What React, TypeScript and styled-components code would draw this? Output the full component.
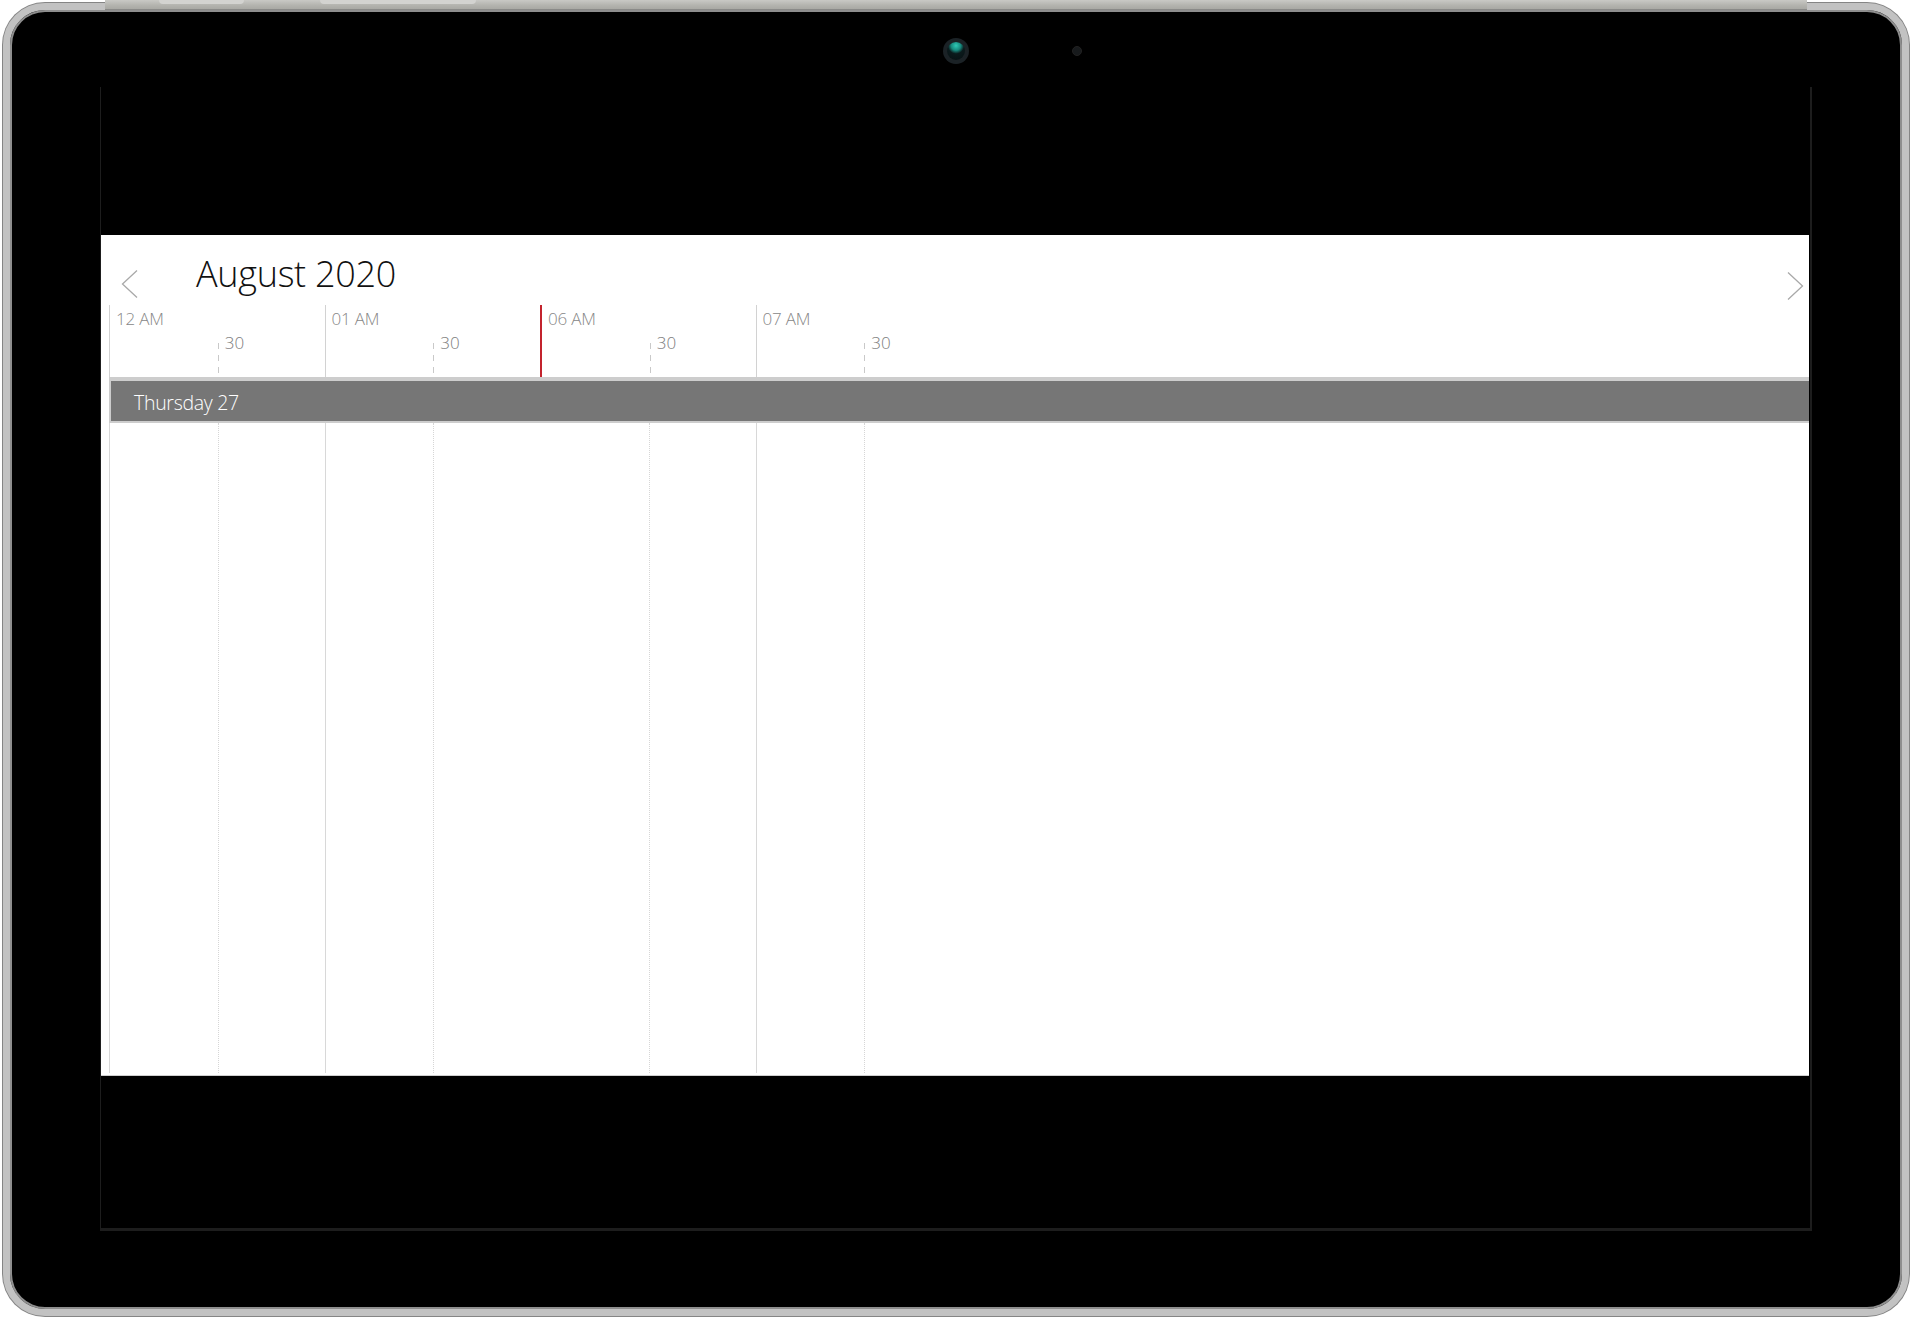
import React from "react";
import styled, { createGlobalStyle } from "styled-components";

const GlobalStyle = createGlobalStyle`
  html, body { margin: 0; padding: 0; background: #ffffff; }
  body { font-family: "Open Sans", "Noto Sans", sans-serif; }
  * { box-sizing: border-box; }
`;

const Page = styled.div`
  position: relative;
  width: 1913px;
  height: 1320px;
  padding: 3px 0 0 3px;
  overflow: hidden;
`;

const TopStrip = styled.div`
  position: absolute;
  top: 0;
  left: 105px;
  width: 1702px;
  height: 10px;
  background: linear-gradient(#c9c9c5, #b3b3ae 60%, #a9a9a4);
  border-bottom: 1px solid #8a8a88;
  display: flex;
  align-items: flex-start;
  gap: 76px;
  padding-left: 54px;
`;

const SideButton = styled.div<{ $w: number }>`
  width: ${(p) => p.$w}px;
  height: 4px;
  background: #d3d3d0;
  border-radius: 0 0 4px 4px;
`;

const Device = styled.div`
  width: 1906px;
  height: 1313px;
  border-radius: 42px;
  border: 7px solid #c2c2c2;
  background: #000;
  box-shadow: 0 0 0 1px #858585, inset 0 0 0 2px #8e8e8e;
  display: flex;
  flex-direction: column;
`;

const CameraBar = styled.div`
  height: 77px;
  flex: none;
  display: grid;
  grid-template-columns: 1fr auto 1fr;
  align-items: start;
  padding-top: 28px;
`;

const Camera = styled.div`
  grid-column: 2;
  width: 26px;
  height: 26px;
  border-radius: 50%;
  background: #1b2226;
  display: flex;
  align-items: center;
  justify-content: center;
`;

const Lens = styled.div`
  width: 18px;
  height: 18px;
  border-radius: 50%;
  background: radial-gradient(circle at 50% 20%, #2fc9b6 0, #17897e 28%, #0b1a1c 48%, #071012 100%);
`;

const Sensor = styled.div`
  grid-column: 3;
  width: 10px;
  height: 10px;
  margin-left: 103px;
  margin-top: 8px;
  border-radius: 50%;
  background: #171a1c;
  border: 1px solid #222;
`;

const Screen = styled.div`
  margin-left: 90px;
  width: 1712px;
  height: 1144px;
  flex: none;
  background: #000;
  border-left: 1px solid #1d1d1d;
  border-right: 2px solid #1d1d1d;
  border-bottom: 3px solid #1d1d1d;
  padding-top: 148px;
`;

const Calendar = styled.div`
  width: 1708px;
  height: 841px;
  background: #fff;
  border-bottom: 1px solid #cfcfcf;
  display: flex;
  flex-direction: column;
`;

const Header = styled.div`
  height: 70px;
  flex: none;
  display: flex;
  align-items: flex-start;
`;

const NavButton = styled.div<{ $side: "left" | "right" }>`
  width: 17px;
  height: 30px;
  margin-top: ${(p) => (p.$side === "left" ? 34 : 36)}px;
  margin-left: ${(p) => (p.$side === "left" ? "20px" : "auto")};
  margin-right: ${(p) => (p.$side === "right" ? "5px" : "0")};
  display: flex;
`;

const Title = styled.div`
  margin-left: 58px;
  margin-top: 21px;
  font-size: 36px;
  line-height: 36px;
  font-weight: 300;
  color: #111;
  letter-spacing: -0.3px;
`;

const Timeline = styled.div`
  flex: 1;
  display: flex;
  flex-direction: column;
  padding-left: 8px;
`;

const TimeHeader = styled.div`
  height: 72px;
  flex: none;
  display: flex;
`;

const HeaderSlot = styled.div<{ $now?: boolean }>`
  width: 215.5px;
  flex: none;
  border-left: ${(p) => (p.$now ? "2px solid #c3232d" : "1px solid #d2d2d2")};
  display: grid;
  grid-template-columns: 107.75px 1fr;
  grid-template-rows: 29px 1fr;
`;

const HourLabel = styled.div`
  grid-column: 1 / 3;
  padding: 5px 0 0 6px;
  font-size: 17px;
  line-height: 17px;
  font-weight: 300;
  color: #878787;
  letter-spacing: -0.2px;
  white-space: nowrap;
`;

const HalfCell = styled.div`
  grid-column: 2;
  grid-row: 2;
  display: flex;
`;

const HalfTick = styled.div`
  width: 1px;
  margin-top: 9px;
  background: repeating-linear-gradient(to bottom, #c9c9c9 0 6px, transparent 6px 12px);
`;

const HalfLabel = styled.div`
  padding-left: 6px;
  font-size: 17px;
  line-height: 17px;
  font-weight: 300;
  color: #7d7d7d;
`;

const DayBar = styled.div`
  height: 46px;
  flex: none;
  background: #767676;
  border-top: 4px solid #cdcdcd;
  border-bottom: 2px solid #cdcdcd;
  border-left: 2px solid #cdcdcd;
  display: flex;
  align-items: center;
  padding: 3px 0 0 23px;
`;

const DayLabel = styled.div`
  font-size: 19.5px;
  line-height: 20px;
  font-weight: 300;
  color: #ffffff;
  letter-spacing: -0.3px;
`;

const Body = styled.div`
  flex: 1;
  display: flex;
  padding-bottom: 2px;
`;

const BodySlot = styled.div<{ $gap?: boolean }>`
  width: 215.5px;
  flex: none;
  border-left: 1px solid ${(p) => (p.$gap ? "transparent" : "#d8d8d8")};
  display: grid;
  grid-template-columns: 107.75px 1fr;
`;

const BodyHalf = styled.div`
  grid-column: 2;
  border-left: 1px dotted #d6d6d6;
`;

const Chevron = ({ dir }: { dir: "left" | "right" }) => (
  <svg width="17" height="30" viewBox="0 0 17 30">
    <path
      d={dir === "left" ? "M16 1.5 L1.5 15 L16 28.5" : "M1 1.5 L15.5 15 L1 28.5"}
      fill="none"
      stroke="#a9a9a9"
      strokeWidth="1.3"
    />
  </svg>
);

const hours = [
  { label: "12 AM" },
  { label: "01 AM" },
  { label: "06 AM", now: true },
  { label: "07 AM" },
];

export default function App() {
  return (
    <>
      <GlobalStyle />
      <Page>
        <Device>
          <CameraBar>
            <Camera>
              <Lens />
            </Camera>
            <Sensor />
          </CameraBar>
          <Screen>
            <Calendar>
              <Header>
                <NavButton $side="left">
                  <Chevron dir="left" />
                </NavButton>
                <Title>August 2020</Title>
                <NavButton $side="right">
                  <Chevron dir="right" />
                </NavButton>
              </Header>
              <Timeline>
                <TimeHeader>
                  {hours.map((h) => (
                    <HeaderSlot key={h.label} $now={h.now}>
                      <HourLabel>{h.label}</HourLabel>
                      <HalfCell>
                        <HalfTick />
                        <HalfLabel>30</HalfLabel>
                      </HalfCell>
                    </HeaderSlot>
                  ))}
                </TimeHeader>
                <DayBar>
                  <DayLabel>Thursday 27</DayLabel>
                </DayBar>
                <Body>
                  {hours.map((h) => (
                    <BodySlot key={h.label} $gap={h.now}>
                      <BodyHalf />
                    </BodySlot>
                  ))}
                </Body>
              </Timeline>
            </Calendar>
          </Screen>
        </Device>
        <TopStrip>
          <SideButton $w={85} />
          <SideButton $w={156} />
        </TopStrip>
      </Page>
    </>
  );
}
